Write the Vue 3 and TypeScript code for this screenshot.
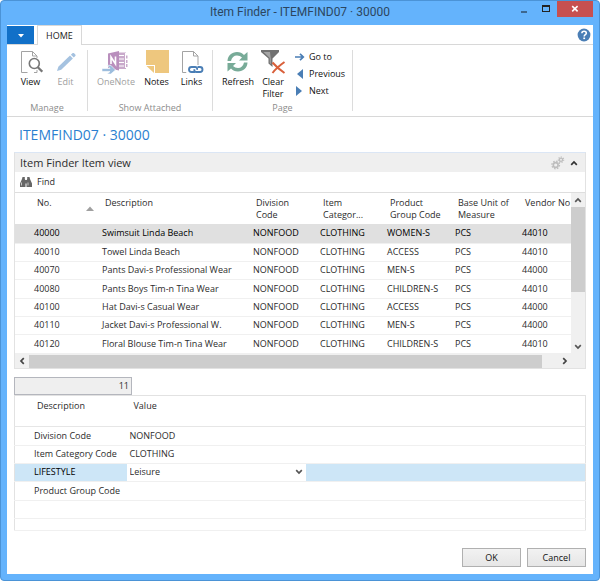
<script setup lang="ts">
import { ref } from 'vue'

interface Item {
  no: string
  description: string
  division: string
  category: string
  group: string
  unit: string
  vendor: string
}

interface FilterLine {
  description: string
  value: string
}

const items: Item[] = [
  { no: '40000', description: 'Swimsuit Linda Beach', division: 'NONFOOD', category: 'CLOTHING', group: 'WOMEN-S', unit: 'PCS', vendor: '44010' },
  { no: '40010', description: 'Towel Linda Beach', division: 'NONFOOD', category: 'CLOTHING', group: 'ACCESS', unit: 'PCS', vendor: '44010' },
  { no: '40070', description: 'Pants Davi-s Professional Wear', division: 'NONFOOD', category: 'CLOTHING', group: 'MEN-S', unit: 'PCS', vendor: '44000' },
  { no: '40080', description: 'Pants Boys Tim-n Tina Wear', division: 'NONFOOD', category: 'CLOTHING', group: 'CHILDREN-S', unit: 'PCS', vendor: '44010' },
  { no: '40100', description: 'Hat Davi-s Casual Wear', division: 'NONFOOD', category: 'CLOTHING', group: 'ACCESS', unit: 'PCS', vendor: '44000' },
  { no: '40110', description: 'Jacket Davi-s Professional W.', division: 'NONFOOD', category: 'CLOTHING', group: 'MEN-S', unit: 'PCS', vendor: '44000' },
  { no: '40120', description: 'Floral Blouse Tim-n Tina Wear', division: 'NONFOOD', category: 'CLOTHING', group: 'CHILDREN-S', unit: 'PCS', vendor: '44010' },
]

const filters: FilterLine[] = [
  { description: 'Division Code', value: 'NONFOOD' },
  { description: 'Item Category Code', value: 'CLOTHING' },
  { description: 'LIFESTYLE', value: 'Leisure' },
  { description: 'Product Group Code', value: '' },
  { description: '', value: '' },
  { description: '', value: '' },
]

const selectedItem = ref(0)
const activeFilter = 2
const lifestyle = ref('Leisure')
const count = ref('11')
</script>

<template>
  <div class="window">
    <header class="titlebar">
      <h1>Item Finder - ITEMFIND07 · 30000</h1>
      <div class="controls">
        <button type="button" class="ctl" aria-label="Minimize">
          <svg width="8" height="8" viewBox="0 0 8 8"><path d="M1 6h6v2H1z" fill="#3d678f" /></svg>
        </button>
        <button type="button" class="ctl" aria-label="Maximize">
          <svg width="8" height="8" viewBox="0 0 8 8"><path d="M0 0h8v7H0zM1 2v4h6V2z" fill="#222" fill-rule="evenodd" /></svg>
        </button>
        <button type="button" class="ctl close" aria-label="Close">
          <svg width="8" height="8" viewBox="0 0 8 8"><path d="M1.2 1.2l5.4 5.2M6.6 1.2L1.2 6.4" stroke="#fff" stroke-width="1.6" /></svg>
        </button>
      </div>
    </header>

    <div class="client">
      <nav class="tabs">
        <button type="button" class="app-menu" aria-label="Application menu">
          <svg width="8" height="5" viewBox="0 0 8 5"><path d="M1 1h6L4 4.400z" fill="#fff" /></svg>
        </button>
        <button type="button" class="tab">HOME</button>
        <button type="button" class="help" aria-label="Help">
          <svg width="14" height="14" viewBox="0 0 14 14">
            <circle cx="7" cy="7" r="6.400" fill="#4a7eb5" />
            <path d="M4.900 5.300c0-1.300.9-2 2.200-2s2.200.7 2.200 1.900c0 1.500-2.100 1.600-2.100 3.300" fill="none" stroke="#fff" stroke-width="1.600" />
            <path d="M6.300 9.500h1.800v1.600H6.300z" fill="#fff" />
          </svg>
        </button>
      </nav>

      <div class="ribbon">
        <section class="group manage">
          <div class="tools">
            <button type="button" class="tool w-sm">
              <svg width="24" height="24" viewBox="0 0 24 24" fill="none">
                <path d="M8.500 22.500h-6v-21h11l4.500 4.500v2M13.500 1.500V6H18M18 20v2.500h-3" stroke="#a3a3a3" />
                <circle cx="15.300" cy="13.500" r="5" fill="#fff" stroke="#777" stroke-width="1.600" />
                <path d="M18.800 17.200l4.500 4.500" stroke="#777" stroke-width="2.200" />
              </svg>
              <span>View</span>
            </button>
            <button type="button" class="tool w-sm" disabled>
              <svg width="24" height="24" viewBox="0 0 24 24" fill="#a5c2e0">
                <path d="M3 21l1.300-4.200L16 5.600l2.900 2.900L7.200 19.700z" />
                <path d="M16.900 4.700l1.500-1.400c.5-.5 1.200-.5 1.700 0l1.200 1.200c.5.5.5 1.100 0 1.600L19.800 7.600z" />
              </svg>
              <span>Edit</span>
            </button>
          </div>
          <h2>Manage</h2>
        </section>

        <section class="group attached">
          <div class="tools">
            <button type="button" class="tool w-lg" disabled>
              <svg width="28" height="24" viewBox="0 0 28 24">
                <path d="M15 2.500h9v3h1.500v3H24v1.500h1.500v3H24V14h1.500v3H24v2H15z" fill="#c9aacb" />
                <path d="M17 5.500h5M17 9h5M17 12.500h5M17 16h5M23.500 3v15" stroke="#fff" stroke-width="1" />
                <path d="M6 3.500L17 1v19.500L6 18z" fill="#b98fbd" />
                <path d="M9 14V7l4.500 7V6.500" fill="none" stroke="#fff" stroke-width="1.600" />
                <path d="M0 18.500h8l-2.800-3.200h3.600l4.700 4.700-4.700 4H5.200L8 21.500H0z" fill="#9dbddd" stroke="#fff" stroke-width=".6" />
              </svg>
              <span>OneNote</span>
            </button>
            <button type="button" class="tool w-sm">
              <svg width="24" height="24" viewBox="0 0 24 24">
                <path d="M1 0h23v23H10v-8H1z" fill="#eec77e" />
                <path d="M1.500 16H9v7z" fill="#eec77e" />
              </svg>
              <span>Notes</span>
            </button>
            <button type="button" class="tool w-sm">
              <svg width="24" height="24" viewBox="0 0 24 24" fill="none">
                <path d="M7 22.500H2.500v-21h11L18 6v10M13.500 1.500V6H18" stroke="#a3a3a3" />
                <rect x="7.500" y="17" width="16" height="6" rx="3" fill="#fff" stroke="#fff" stroke-width="4" />
                <path d="M15 22h-3.500c-3.300 0-3.300-5 0-5H15c1.700 0 2.500 1.300 2 2.700" stroke="#4a7eb5" stroke-width="1.900" />
                <path d="M17.500 17H20c3.300 0 3.300 5 0 5h-3.500c-1.700 0-2.500-1.300-2-2.700" stroke="#4a7eb5" stroke-width="1.900" />
              </svg>
              <span>Links</span>
            </button>
          </div>
          <h2>Show Attached</h2>
        </section>

        <section class="group page">
          <div class="tools">
            <button type="button" class="tool w-md">
              <svg width="24" height="24" viewBox="0 0 24 24" fill="#78ab98">
                <path d="M1.500 11C1.700 5.500 5.800 2 11 2c3 0 5.300 1 7 2.900L21.500 2v8.500H13l3-3C14.700 6.200 13 5.500 11 5.500c-3 0-5.400 2-6 5.500z" />
                <path d="M21.500 12.500c-.2 5.500-4.300 9-9.500 9-3 0-5.300-1-7-2.900l-3.500 2.900V13H10l-3 3c1.300 1.300 3 2 5 2 3 0 5.400-2 6-5.500z" />
              </svg>
              <span>Refresh</span>
            </button>
            <button type="button" class="tool w-xs">
              <svg width="26" height="24" viewBox="0 0 26 24">
                <path d="M1 0h18v2l-6.500 6.500V17l-4-3.500v-5L1 2z" fill="#717171" />
                <path d="M3.500 2H10l.8 6.800v5.700L9.800 13V8z" fill="#a5a5a5" />
                <path d="M12.500 12.500c3 3.500 7 7 12 10.500M24.500 12c-5 3.500-9 7-12 11" fill="none" stroke="#d9603b" stroke-width="2" />
              </svg>
              <span>Clear<br />Filter</span>
            </button>
            <ul class="links">
              <li>
                <button type="button">
                  <svg width="10" height="8" viewBox="0 0 10 8"><path d="M0 4h7.500M5 .8L8.300 4 5 7.200" fill="none" stroke="#4a7eb5" stroke-width="1.700" /></svg>
                  Go to
                </button>
              </li>
              <li>
                <button type="button">
                  <svg width="10" height="10" viewBox="0 0 10 10"><path d="M8 0v10L2 5z" fill="#4a7eb5" /></svg>
                  Previous
                </button>
              </li>
              <li>
                <button type="button">
                  <svg width="10" height="10" viewBox="0 0 10 10"><path d="M1 0v10l6-5z" fill="#4a7eb5" /></svg>
                  Next
                </button>
              </li>
            </ul>
          </div>
          <h2>Page</h2>
        </section>
      </div>

      <main class="body">
        <h2 class="heading">ITEMFIND07 · 30000</h2>

        <section class="part">
          <div class="part-head">
            <h3>Item Finder Item view</h3>
            <button type="button" class="icon" aria-label="Customize">
              <svg width="14" height="14" viewBox="0 0 14 14" fill="none" stroke="#bdbdbd">
                <circle cx="4.700" cy="9" r="2.400" stroke-width="1.600" />
                <circle cx="4.700" cy="9" r="3.800" stroke-width="1.300" stroke-dasharray="1.500 1.480" />
                <circle cx="10" cy="3.700" r="1.600" stroke-width="1.300" />
                <circle cx="10" cy="3.700" r="2.700" stroke-width="1.200" stroke-dasharray="1.200 1.220" />
              </svg>
            </button>
            <button type="button" class="icon" aria-label="Collapse">
              <svg width="8" height="6" viewBox="0 0 8 6"><path d="M1.200 4.800L4 2l2.800 2.800" fill="none" stroke="#333" stroke-width="1.700" /></svg>
            </button>
          </div>
          <div class="part-actions">
            <button type="button" class="find">
              <svg width="12" height="12" viewBox="0 0 12 12" fill="#666">
                <path d="M2.500 1h2.300v2l.7 1.500V11H0V7.500L2 3z" />
                <path d="M9.500 1H7.200v2l-.7 1.500V11H12V7.500L10 3z" />
                <path d="M4.500 4h3v3.500h-3z" />
                <path d="M1.500 6.500v3M8 6.500v3" stroke="#ddd" stroke-width=".8" />
              </svg>
              Find
            </button>
          </div>

          <div class="grid">
            <div class="grid-view">
              <table class="items">
                <colgroup>
                  <col class="c-no" />
                  <col />
                  <col class="c-code" />
                  <col class="c-code" />
                  <col class="c-group" />
                  <col class="c-code" />
                  <col class="c-vendor" />
                </colgroup>
                <thead>
                  <tr>
                    <th>
                      <div class="sorted">
                        No.
                        <svg width="8" height="5" viewBox="0 0 8 5"><path d="M0 5l4-4.500L8 5z" fill="#a0a0a0" /></svg>
                      </div>
                    </th>
                    <th>Description</th>
                    <th>Division<br />Code</th>
                    <th>Item<br />Categor...</th>
                    <th>Product<br />Group Code</th>
                    <th>Base Unit of<br />Measure</th>
                    <th>Vendor No</th>
                  </tr>
                </thead>
                <tbody>
                  <tr v-for="(item, i) in items" :key="item.no" :class="{ selected: i === selectedItem }" @click="selectedItem = i">
                    <td>{{ item.no }}</td>
                    <td>{{ item.description }}</td>
                    <td>{{ item.division }}</td>
                    <td>{{ item.category }}</td>
                    <td>{{ item.group }}</td>
                    <td>{{ item.unit }}</td>
                    <td>{{ item.vendor }}</td>
                  </tr>
                </tbody>
              </table>
            </div>
            <div class="vscroll">
              <button type="button" aria-label="Scroll up">
                <svg width="8" height="6" viewBox="0 0 8 6"><path d="M1.200 4.800L4 2l2.800 2.800" fill="none" stroke="#555" stroke-width="1.700" /></svg>
              </button>
              <div class="track"><div class="thumb"></div></div>
              <button type="button" aria-label="Scroll down">
                <svg width="8" height="6" viewBox="0 0 8 6"><path d="M1.200 1.200L4 4l2.800-2.800" fill="none" stroke="#555" stroke-width="1.700" /></svg>
              </button>
            </div>
          </div>
          <div class="hscroll">
            <button type="button" aria-label="Scroll left">
              <svg width="6" height="8" viewBox="0 0 6 8"><path d="M4.800 1.200L2 4l2.800 2.800" fill="none" stroke="#444" stroke-width="1.700" /></svg>
            </button>
            <div class="track"><div class="thumb"></div></div>
            <button type="button" aria-label="Scroll right">
              <svg width="6" height="8" viewBox="0 0 6 8"><path d="M1.200 1.200L4 4 1.200 6.800" fill="none" stroke="#444" stroke-width="1.700" /></svg>
            </button>
          </div>
        </section>

        <input v-model="count" class="count" type="text" readonly aria-label="Item count" />

        <table class="filters">
          <colgroup>
            <col class="f-desc" />
            <col class="f-value" />
            <col />
          </colgroup>
          <thead>
            <tr>
              <th>Description</th>
              <th>Value</th>
              <th></th>
            </tr>
          </thead>
          <tbody>
            <tr v-for="(line, i) in filters" :key="i" :class="{ active: i === activeFilter }">
              <td>{{ line.description }}</td>
              <td v-if="i === activeFilter" class="edit">
                <div class="combo">
                  <select v-model="lifestyle" aria-label="Lifestyle value">
                    <option>Leisure</option>
                  </select>
                  <svg width="8" height="6" viewBox="0 0 8 6"><path d="M1.200 1.200L4 4l2.800-2.800" fill="none" stroke="#555" stroke-width="1.700" /></svg>
                </div>
              </td>
              <td v-else>{{ line.value }}</td>
              <td></td>
            </tr>
          </tbody>
        </table>
      </main>

      <footer class="actions">
        <button type="button">OK</button>
        <button type="button">Cancel</button>
      </footer>
    </div>
  </div>
</template>

<style>
body {
  background: #fff;
}
</style>

<style scoped>
* {
  box-sizing: border-box;
}

.window {
  display: flex;
  flex-direction: column;
  min-height: 100vh;
  padding: 0 6px 6px;
  border: 1px solid #4b93d6;
  border-radius: 4px;
  background: #64b3fc;
  color: #2c2c2c;
  font: 9px/12px 'Open Sans', 'Noto Sans', sans-serif;
}

h1,
h2,
h3,
ul {
  margin: 0;
  padding: 0;
  font-size: 9px;
  font-weight: 400;
}

button,
input,
select {
  margin: 0;
  padding: 0;
  border: 0;
  border-radius: 0;
  background: none;
  color: inherit;
  font: inherit;
}

svg {
  display: block;
  flex: none;
}

.titlebar {
  display: grid;
  grid-template-columns: 1fr auto 1fr;
  height: 24px;
}

.titlebar h1 {
  grid-column: 2;
  color: #2c4660;
  font-family: Roboto, sans-serif;
  font-size: 12px;
  line-height: 23px;
}

.controls {
  display: flex;
  justify-content: flex-end;
  height: 16px;
}

.ctl {
  display: flex;
  align-items: center;
  justify-content: center;
  width: 22px;
}

.close {
  width: 36px;
  background: #c75050;
}

.client {
  display: flex;
  flex: 1;
  flex-direction: column;
  background: #fff;
}

.tabs {
  display: flex;
  height: 20px;
  border-bottom: 1px solid #d8d8d8;
}

.app-menu {
  display: flex;
  align-items: center;
  justify-content: center;
  width: 27px;
  margin: 1px 3px 0 0;
  background: #1170c8;
}

.tab {
  height: 20px;
  padding: 0 8px;
  border: 1px solid #d8d8d8;
  border-bottom: 0;
  background: #fff;
  color: #222;
}

.help {
  margin-left: auto;
  padding: 0 2px;
}

.ribbon {
  display: flex;
  height: 72px;
  padding: 5px 0;
  border-bottom: 1px solid #d8d8d8;
}

.group {
  display: flex;
  flex-direction: column;
  justify-content: space-between;
  border-right: 1px solid #dcdcdc;
}

.group h2 {
  color: #8c8c8c;
  line-height: 6px;
  text-align: center;
}

.tools {
  display: flex;
  align-items: flex-start;
}

.manage .tools {
  padding: 0 4px 0 6px;
}

.attached .tools {
  padding: 0 3px 0 5px;
}

.page .tools {
  height: 53px;
  padding: 0 0 0 6px;
}

.page {
  width: 140px;
}

.tool {
  display: flex;
  flex-direction: column;
  align-items: center;
  gap: 2px;
  color: #111;
}

.tool:disabled {
  color: #a0a0a0;
}

.w-lg {
  width: 46px;
}

.w-md {
  width: 38px;
}

.w-sm {
  width: 35px;
}

.w-xs {
  width: 32px;
}

.links {
  display: flex;
  flex-direction: column;
  gap: 5px;
  padding: 1px 0 0 6px;
  list-style: none;
}

.links button {
  display: flex;
  align-items: center;
  gap: 4px;
  color: #111;
}

.body {
  padding: 0 7px;
}

.heading {
  padding: 8px 5px 7px;
  color: #2b7fd0;
  font-size: 14px;
  line-height: 20px;
}

.part {
  border: 1px solid #e2e2e2;
  border-top-color: #dbe6f5;
}

.part-head {
  display: flex;
  align-items: center;
  gap: 5px;
  height: 19px;
  padding: 0 7px 0 5px;
  background: #efefef;
}

.part-head h3 {
  flex: 1;
  font-size: 11px;
}

.icon {
  display: flex;
}

.part-actions {
  display: flex;
  height: 21px;
  padding: 0 5px;
  border-bottom: 1px solid #dedede;
}

.find {
  display: flex;
  align-items: center;
  gap: 5px;
}

.grid {
  display: flex;
}

.grid-view {
  flex: 1;
  min-width: 0;
  overflow: hidden;
}

table {
  width: 100%;
  border-collapse: collapse;
  table-layout: fixed;
}

th,
td {
  overflow: hidden;
  padding: 0 0 0 4px;
  font-weight: 400;
  text-align: left;
  white-space: nowrap;
}

th {
  padding-left: 7px;
  vertical-align: top;
}

th:first-child {
  padding-left: 22px;
}

td:first-child {
  padding-left: 19px;
}

.items thead tr {
  height: 31px;
}

.items th {
  padding-top: 4px;
}

tbody tr {
  height: 18px;
  border-bottom: 1px solid #f0f0f0;
}

tbody tr:nth-child(3n + 1) {
  height: 19px;
}

.items tbody tr.selected {
  background: #e0e0e0;
  color: #000;
}

.c-no {
  width: 83px;
}

.c-code {
  width: 67px;
}

.c-group {
  width: 68px;
}

.c-vendor {
  width: 53px;
}

.sorted {
  display: flex;
  align-items: flex-start;
  justify-content: space-between;
  padding-right: 4px;
}

.sorted svg {
  margin-top: 9px;
}

.vscroll {
  display: flex;
  flex-direction: column;
  width: 14px;
  background: #f0f0f0;
}

.vscroll button,
.hscroll button {
  display: flex;
  align-items: center;
  justify-content: center;
  width: 14px;
  height: 14px;
}

.vscroll button {
  width: 100%;
}

.track {
  flex: 1;
}

.vscroll .thumb {
  height: 64%;
  background: #cdcdcd;
}

.hscroll {
  display: flex;
  align-items: stretch;
  height: 14px;
  padding-top: 1px;
  background: #f0f0f0;
}

.hscroll button {
  height: auto;
}

.hscroll button:last-child {
  margin-right: 13px;
}

.hscroll .thumb {
  width: 97%;
  height: 100%;
  background: #cdcdcd;
}

.count {
  display: block;
  width: 118px;
  height: 18px;
  margin-top: 8px;
  padding: 0 2px;
  border: 1px solid #b4b6bd;
  background: #efefef;
  text-align: right;
}

.filters {
  border: 1px solid #e2e2e2;
}

.filters thead tr {
  height: 31px;
  border-bottom: 1px solid #e6e6e6;
}

.filters th {
  padding-top: 4px;
}

.filters tbody tr:last-child {
  height: 12px;
}

.filters td:nth-child(2) {
  padding-left: 3px;
}

.f-desc {
  width: 112px;
}

.f-value {
  width: 179px;
}

.active {
  background: #cde6f7;
  color: #000;
}

.active .edit {
  background: #fff;
  color: #2c2c2c;
}

.combo {
  display: grid;
  align-items: center;
}

.combo select,
.combo svg {
  grid-area: 1 / 1;
}

.combo select {
  width: 100%;
  height: 16px;
  appearance: none;
}

.combo svg {
  justify-self: end;
  margin-right: 3px;
  pointer-events: none;
}

.actions {
  display: flex;
  justify-content: flex-end;
  gap: 6px;
  margin-top: auto;
  padding: 12px 7px 7px;
}

.actions button {
  width: 59px;
  height: 19px;
  border: 1px solid #b0b0b0;
  background: linear-gradient(#f2f2f2, #e6e6e6);
  color: #111;
}
</style>
